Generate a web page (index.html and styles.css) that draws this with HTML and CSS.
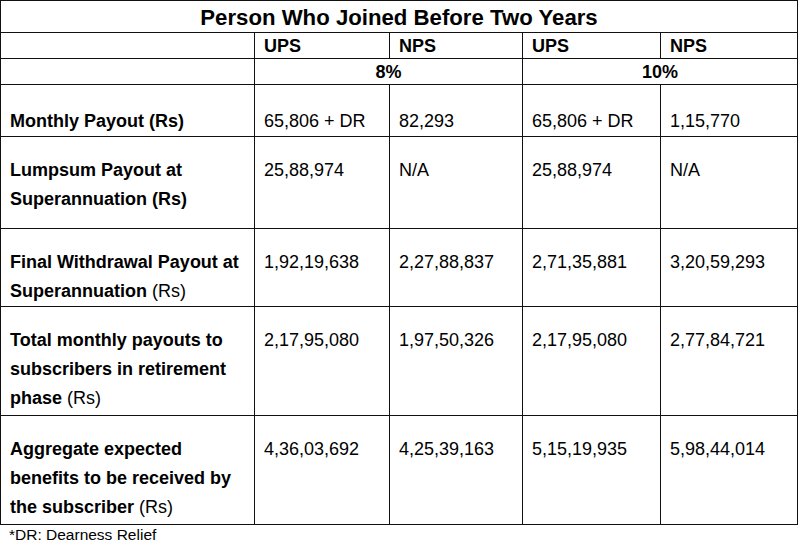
FILE: index.html
```html
<!DOCTYPE html>
<html lang="en">
<head>
<meta charset="utf-8">
<title>Person Who Joined Before Two Years</title>
<link rel="stylesheet" href="styles.css">
</head>
<body>
<div class="sheet">
  <div class="grid" role="table">
    <div class="cell title">Person Who Joined Before Two Years</div>

    <div class="cell head"></div>
    <div class="cell head b">UPS</div>
    <div class="cell head b">NPS</div>
    <div class="cell head b">UPS</div>
    <div class="cell head b">NPS</div>

    <div class="cell head"></div>
    <div class="cell head rate b">8%</div>
    <div class="cell head rate b">10%</div>

    <div class="cell body first b">Monthly Payout (Rs)</div>
    <div class="cell body first">65,806 + DR</div>
    <div class="cell body first">82,293</div>
    <div class="cell body first">65,806 + DR</div>
    <div class="cell body first">1,15,770</div>

    <div class="cell body b">Lumpsum Payout at<br>Superannuation (Rs)</div>
    <div class="cell body">25,88,974</div>
    <div class="cell body">N/A</div>
    <div class="cell body">25,88,974</div>
    <div class="cell body">N/A</div>

    <div class="cell body b">Final Withdrawal Payout at<br>Superannuation <span class="rs">(Rs)</span></div>
    <div class="cell body">1,92,19,638</div>
    <div class="cell body">2,27,88,837</div>
    <div class="cell body">2,71,35,881</div>
    <div class="cell body">3,20,59,293</div>

    <div class="cell body b">Total monthly payouts to<br>subscribers in retirement<br>phase <span class="rs">(Rs)</span></div>
    <div class="cell body">2,17,95,080</div>
    <div class="cell body">1,97,50,326</div>
    <div class="cell body">2,17,95,080</div>
    <div class="cell body">2,77,84,721</div>

    <div class="cell body b">Aggregate expected<br>benefits to be received by<br>the subscriber <span class="rs">(Rs)</span></div>
    <div class="cell body">4,36,03,692</div>
    <div class="cell body">4,25,39,163</div>
    <div class="cell body">5,15,19,935</div>
    <div class="cell body">5,98,44,014</div>
  </div>
  <p class="note">*DR: Dearness Relief</p>
</div>
</body>
</html>
```
FILE: styles.css
```css
html, body {
  margin: 0;
  padding: 0;
  background: #ffffff;
}

.sheet {
  font-family: "Liberation Sans", Arial, sans-serif;
  color: #000000;
  width: 801px;
}

.grid {
  display: grid;
  width: 797px;
  grid-template-columns: 254px 135px 133px 138px 137px;
  grid-template-rows: 32px 26px 26px 52px 92px 78px 109px 109px;
  border-top: 1px solid #111;
  border-left: 1px solid #111;
}

.cell {
  border-right: 1px solid #111;
  border-bottom: 1px solid #111;
  font-size: 18px;
  line-height: 29px;
  padding: 19px 0 0 9px;
  box-sizing: border-box;
  min-width: 0;
}

.b { font-weight: bold; }
.rs { font-weight: normal; }

.title {
  grid-column: 1 / 6;
  text-align: center;
  font-size: 22.2px;
  font-weight: bold;
  line-height: 31px;
  padding: 1px 0 0 0;
}

.head {
  line-height: 26px;
  padding-top: 0;
}

.rate {
  grid-column: span 2;
  text-align: center;
  padding-left: 0;
}

.body.first {
  padding-top: 22px;
}

.note {
  margin: 0;
  padding-left: 9px;
  font-size: 15.5px;
  line-height: 19px;
}
```
